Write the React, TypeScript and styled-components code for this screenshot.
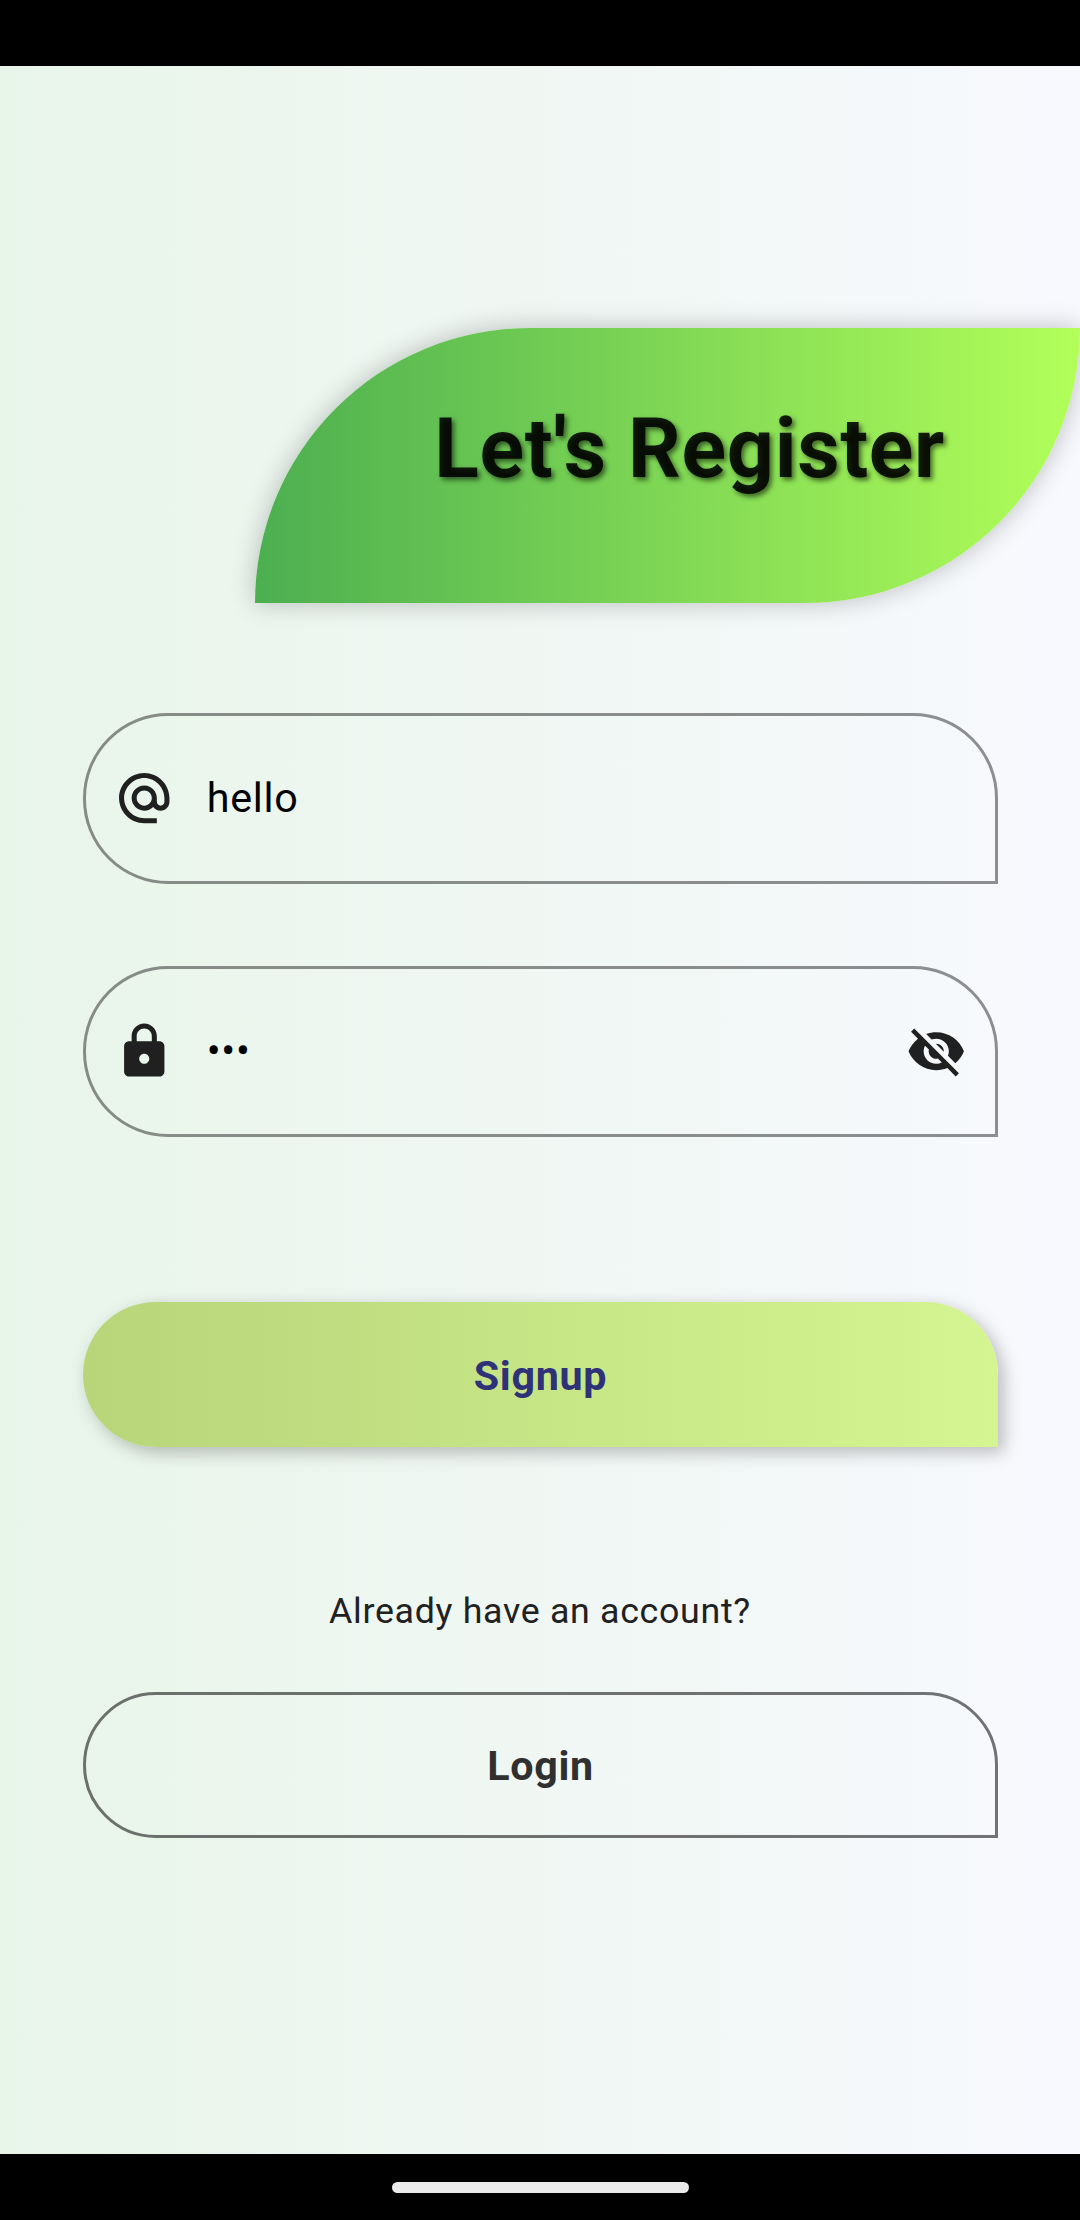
import React from "react";
import styled, { createGlobalStyle } from "styled-components";

const Global = createGlobalStyle`
  * { box-sizing: border-box; }
  body { margin: 0; background: #000; font-family: Roboto, "Noto Sans", sans-serif; }
`;

const Screen = styled.div`
  width: 1080px;
  height: 2220px;
  display: flex;
  flex-direction: column;
  background: #000;
`;

const StatusBar = styled.div`
  height: 66px;
  flex: none;
`;

const Page = styled.main`
  flex: 1;
  display: flex;
  flex-direction: column;
  align-items: center;
  padding-top: 262px;
  background: linear-gradient(90deg, #e8f5e9, #f8f9fe);
  overflow: hidden;
`;

const Banner = styled.header`
  flex: none;
  align-self: flex-end;
  width: 825px;
  height: 275px;
  display: flex;
  justify-content: flex-end;
  padding: 72px 135px 0 0;
  border-radius: 275px 0 275px 0;
  background: linear-gradient(90deg, #4caf50, #b2ff59);
  box-shadow: 0 0 26px rgba(0, 0, 0, 0.24);
`;

const Title = styled.h1`
  margin: 0;
  font-size: 82.5px;
  line-height: 97px;
  font-weight: 700;
  letter-spacing: 0.6875px;
  white-space: nowrap;
  color: rgba(0, 0, 0, 0.87);
  text-shadow: 2.75px 2.75px 5.5px rgba(0, 0, 0, 0.54);
`;

const Form = styled.form`
  width: 915px;
  display: flex;
  flex-direction: column;
`;

const Field = styled.label<{ $gap: number }>`
  margin-top: ${(p) => p.$gap}px;
  height: 170.5px;
  display: flex;
  align-items: center;
  padding: 0 28.5px 0 28.25px;
  border: 3px solid rgba(0, 0, 0, 0.43);
  border-radius: 85px 85px 0 85px;
`;

const Icon = styled.svg`
  width: 60.5px;
  height: 60.5px;
  flex: none;
  fill: rgba(0, 0, 0, 0.87);
`;

const Value = styled.span`
  flex: 1;
  margin-left: 32.5px;
  font-size: 41.25px;
  line-height: 48px;
  letter-spacing: 0.6875px;
  color: #000;
`;

const Signup = styled.button`
  margin: 165px 0 0;
  height: 145.75px;
  padding: 3px 0 0 1px;
  border: 0;
  border-radius: 73px 73px 0 73px;
  background: linear-gradient(90deg, #b8d57a, #d4f591);
  box-shadow: 5.5px 5.5px 17px rgba(0, 0, 0, 0.25);
  font: 700 41.25px/48px Roboto, sans-serif;
  letter-spacing: 0.6875px;
  color: #2f3179;
`;

const Prompt = styled.p`
  margin: 142.75px 0 0;
  text-align: center;
  font-size: 35.75px;
  line-height: 42px;
  letter-spacing: 0.6875px;
  color: #212121;
`;

const Login = styled.button`
  margin: 60px 0 0;
  height: 145.75px;
  padding: 2px 0 0 1px;
  border: 3px solid rgba(0, 0, 0, 0.54);
  border-radius: 73px 73px 0 73px;
  background: transparent;
  font: 700 41.25px/48px Roboto, sans-serif;
  letter-spacing: 0.6875px;
  color: #303030;
`;

const NavBar = styled.footer`
  height: 66px;
  flex: none;
  display: flex;
  justify-content: center;
  align-items: center;
`;

const Handle = styled.div`
  width: 297px;
  height: 11px;
  border-radius: 6px;
  background: #ebebeb;
`;

export default function App() {
  return (
    <>
      <Global />
      <Screen>
        <StatusBar />
        <Page>
          <Banner>
            <Title>Let's Register</Title>
          </Banner>
          <Form>
            <Field $gap={110}>
              <Icon viewBox="0 0 24 24">
                <path d="M12 1.95c-5.52 0-10 4.48-10 10s4.48 10 10 10h5v-2h-5c-4.34 0-8-3.66-8-8s3.66-8 8-8 8 3.66 8 8v1.43c0 .79-.71 1.57-1.5 1.57s-1.5-.78-1.5-1.57v-1.43c0-2.76-2.24-5-5-5s-5 2.24-5 5 2.24 5 5 5c1.38 0 2.64-.56 3.54-1.47.65.89 1.77 1.47 2.96 1.47 1.97 0 3.5-1.6 3.5-3.57v-1.43c0-5.52-4.48-10-10-10zm0 13c-1.66 0-3-1.34-3-3s1.34-3 3-3 3 1.34 3 3-1.34 3-3 3z" />
              </Icon>
              <Value>hello</Value>
            </Field>
            <Field $gap={82.5}>
              <Icon viewBox="0 0 24 24">
                <path d="M18 8h-1V6c0-2.76-2.24-5-5-5S7 3.24 7 6v2H6c-1.1 0-2 .9-2 2v10c0 1.1.9 2 2 2h12c1.1 0 2-.9 2-2V10c0-1.1-.9-2-2-2zm-6 9c-1.1 0-2-.9-2-2s.9-2 2-2 2 .9 2 2-.9 2-2 2zM9 8V6c0-1.66 1.34-3 3-3s3 1.34 3 3v2H9z" />
              </Icon>
              <Value>•••</Value>
              <Icon viewBox="0 0 24 24">
                <path d="M12 7c2.76 0 5 2.24 5 5 0 .65-.13 1.26-.36 1.83l2.92 2.92c1.51-1.26 2.7-2.89 3.43-4.75-1.73-4.39-6-7.5-11-7.5-1.4 0-2.74.25-3.98.7l2.16 2.16C10.74 7.13 11.35 7 12 7zM2 4.27l2.28 2.28.46.46C3.08 8.3 1.78 10.02 1 12c1.73 4.39 6 7.5 11 7.5 1.55 0 3.03-.3 4.38-.84l.42.42L19.73 22 21 20.73 3.27 3 2 4.27zM7.53 9.8l1.55 1.55c-.05.21-.08.43-.08.65 0 1.66 1.34 3 3 3 .22 0 .44-.03.65-.08l1.55 1.55c-.67.33-1.41.53-2.2.53-2.76 0-5-2.24-5-5 0-.79.2-1.53.53-2.2zm4.31-.78l3.15 3.15.02-.16c0-1.66-1.34-3-3-3l-.17.01z" />
              </Icon>
            </Field>
            <Signup type="button">Signup</Signup>
            <Prompt>Already have an account?</Prompt>
            <Login type="button">Login</Login>
          </Form>
        </Page>
        <NavBar>
          <Handle />
        </NavBar>
      </Screen>
    </>
  );
}
